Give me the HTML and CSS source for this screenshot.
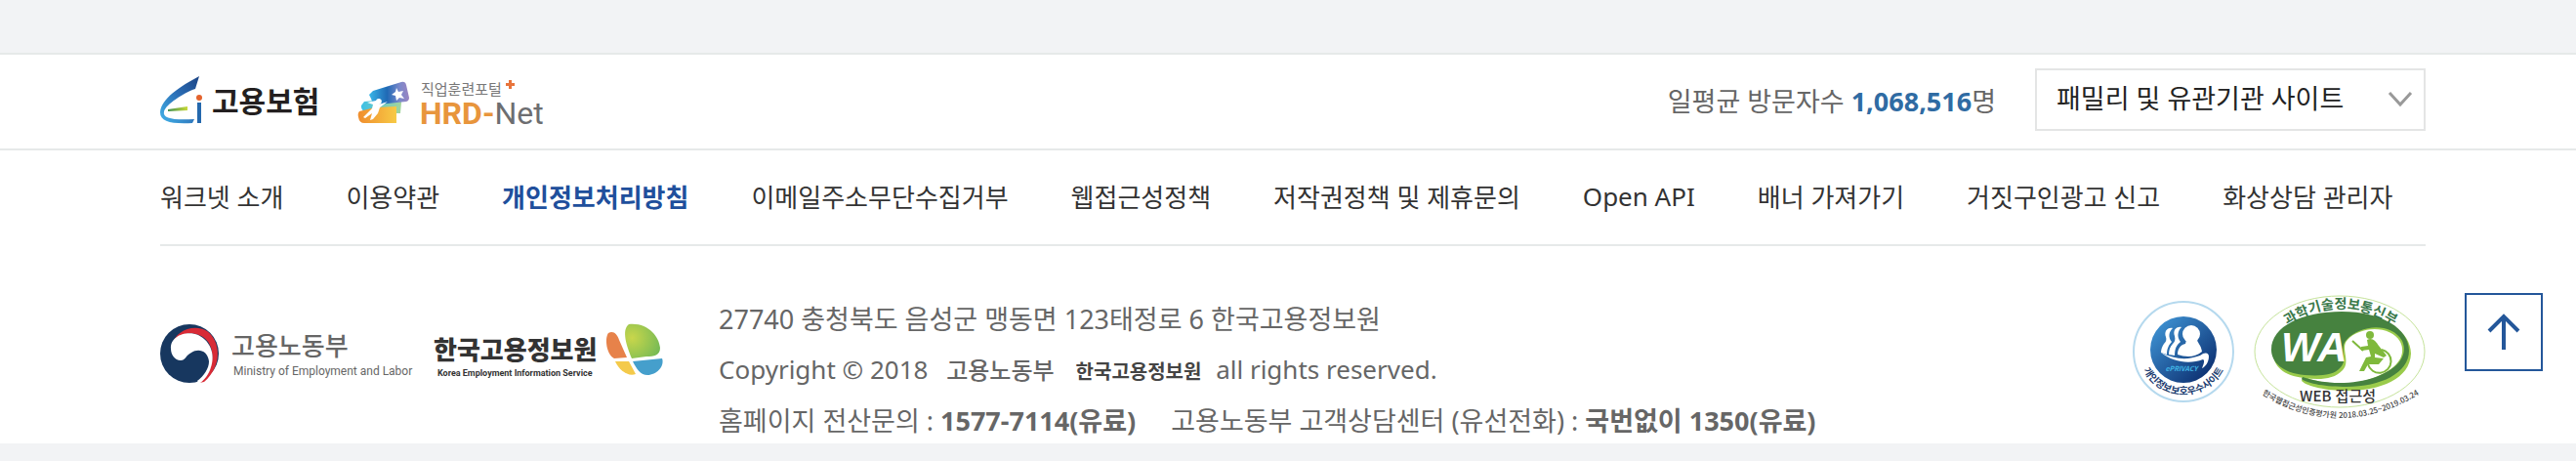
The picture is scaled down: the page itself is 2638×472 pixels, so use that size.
FILE: index.html
```html
<!DOCTYPE html>
<html lang="ko">
<head>
<meta charset="UTF-8" />
<meta name="viewport" content="width=device-width, initial-scale=1" />
<title>워크넷</title>
<link rel="stylesheet" href="styles.css">
</head>
<body>
<footer class="footer">
  <div class="footer-top">
    <div class="partners">
      <a href="#" aria-label="고용보험">
        <svg width="162" height="52" viewBox="0 0 162 52">
          <defs>
            <linearGradient id="eiBlue" x1="0" y1="1" x2="1" y2="0">
              <stop offset="0" stop-color="#43b4ea" />
              <stop offset="0.55" stop-color="#2a6cb4" />
              <stop offset="1" stop-color="#1c4485" />
            </linearGradient>
            <linearGradient id="eiBar">
              <stop offset="0" stop-color="#3f8f50" />
              <stop offset="1" stop-color="#c9d938" />
            </linearGradient>
          </defs>
          <path fill="url(#eiBlue)" d="M40 2L36 15C24 19 6 31 4 38C2 46 15 47 35 46L33 50C12 51 0 49 0 39C1 25 21 12 40 2Z" />
          <path fill="url(#eiBar)" d="M8 36L28 33V37L8 38Z" />
          <circle cx="40" cy="24" r="3" fill="#e4632d" />
          <path fill="#2468ad" d="M38 29h4v21h-4z" />
          <text class="logo-ei" x="53" y="39">고용보험</text>
        </svg>
      </a>
      <a href="#" aria-label="직업훈련포털 HRD-Net">
        <svg width="194" height="52" viewBox="0 0 194 52">
          <defs>
            <linearGradient id="hrdBlue">
              <stop offset="0" stop-color="#38b6e8" />
              <stop offset="0.45" stop-color="#2069b5" />
              <stop offset="0.75" stop-color="#7888cb" />
              <stop offset="1" stop-color="#9b85c2" />
            </linearGradient>
            <linearGradient id="hrdOrange">
              <stop offset="0" stop-color="#f08d2d" />
              <stop offset="1" stop-color="#f7ca46" />
            </linearGradient>
            <linearGradient id="hrdTeal">
              <stop offset="0" stop-color="#3dc0e6" />
              <stop offset="1" stop-color="#a4d59b" />
            </linearGradient>
          </defs>
          <path fill="url(#hrdTeal)" d="M7 28L42 25Q45 26 45 29L44 40H9Q3 36 4 32Z" />
          <path fill="url(#hrdOrange)" d="M2 38Q0 40 1 44Q2 50 7 50H40V33L18 34Z" />
          <path fill="url(#hrdBlue)" d="M16 17L45 8Q49 7 50 11L53 24Q53 27 50 28L21 31Q15 30 14 25L12 21Z" />
          <path fill="#fff" d="M40 14l2 4 5-1-2 4 3 4-5-1-3 3-1-5-4-1 4-3z" />
          <path fill="#fff" d="M19 27a3 3 0 1 1 3 4l9-3-8 6-2 6-5 6-3 1 2-7-7 5-2-1 9-9 1-4-6-2z" />
          <text class="logo-hrd-small" x="65" y="21">직업훈련포털</text>
          <path fill="#e8743b" d="M155 6h3v3h3v3h-3v3h-3v-3h-3v-3h3z" />
          <text class="logo-hrd" x="64" y="51">HRD-<tspan class="logo-net">Net</tspan></text>
        </svg>
      </a>
    </div>
    <div class="top-right">
      <p class="visitors">일평균 방문자수 <strong>1,068,516</strong>명</p>
      <div class="family">
        <select aria-label="패밀리 및 유관기관 사이트">
          <option>패밀리 및 유관기관 사이트</option>
        </select>
        <svg class="chevron" width="26" height="16" viewBox="0 0 26 16"><path d="M2 1l11 12L24 1" fill="none" stroke="#999" stroke-width="3" /></svg>
      </div>
    </div>
  </div>

  <div class="footer-body">
    <nav class="menu">
      <a href="#">워크넷 소개</a>
      <a href="#">이용약관</a>
      <a href="#" class="privacy">개인정보처리방침</a>
      <a href="#">이메일주소무단수집거부</a>
      <a href="#">웹접근성정책</a>
      <a href="#">저작권정책 및 제휴문의</a>
      <a href="#">Open API</a>
      <a href="#">배너 가져가기</a>
      <a href="#">거짓구인광고 신고</a>
      <a href="#">화상상담 관리자</a>
    </nav>

    <div class="info">
      <div class="agencies">
        <a href="#" aria-label="고용노동부">
          <svg width="264" height="60" viewBox="0 0 264 60">
            <circle cx="30" cy="30" r="30" fill="#17375f" />
            <path fill="#d82b36" d="M12 22C15 7 34 -1 48 7C62 17 64 43 45 59L40 60L49 50C57 35 54 18 42 12C29 5 17 12 12 22Z" />
            <path fill="#fff" d="M11 25C10 12 27 6 39 11C53 18 57 33 51 47C48 54 44 58 40 61L38 58C45 53 50 45 50 38C49 27 39 24 32 29C26 32 26 37 21 37C15 37 11 31 11 25Z" />
            <text class="logo-moel" x="73" y="32">고용노동부</text>
            <text class="logo-moel-en" x="75" y="52">Ministry of Employment and Labor</text>
          </svg>
        </a>
        <a href="#" aria-label="한국고용정보원">
          <svg width="236" height="60" viewBox="0 0 236 60">
            <defs>
              <radialGradient id="leafGreen" cx="0.2" cy="0.4" r="0.9">
                <stop offset="0" stop-color="#c9d64b" />
                <stop offset="1" stop-color="#72b955" />
              </radialGradient>
            </defs>
            <text class="logo-keis" x="0" y="36">한국고용정보원</text>
            <text class="logo-keis-en" x="4" y="53">Korea Employment Information Service</text>
            <path fill="#e7824a" d="M179 9C184 6 188 10 190 16L198 34L185 35C177 31 175 14 179 9Z" />
            <path fill="url(#leafGreen)" d="M200 0C220 -2 231 13 232 24C232 32 226 33 218 33L203 35C198 23 192 6 200 0Z" />
            <path fill="#f4ca4b" d="M186 38H200L207 51C199 54 190 47 186 38Z" />
            <path fill="#459fcc" d="M204 38L234 35C237 43 228 52 219 52C212 52 208 46 204 38Z" />
          </svg>
        </a>
      </div>

      <address class="address">
        <p>27740 충청북도 음성군 맹동면 123태정로 6 한국고용정보원</p>
        <p class="copyright">Copyright © 2018 <span class="mark-moel">고용노동부</span><span class="mark-keis">한국고용정보원</span> all rights reserved.</p>
        <p><span class="phone">홈페이지 전산문의 : <strong>1577-7114(유료)</strong></span>고용노동부 고객상담센터 (유선전화) : <strong>국번없이 1350(유료)</strong></p>
      </address>

      <div class="badges">
        <a href="#" aria-label="개인정보보호우수사이트">
          <svg width="104" height="104" viewBox="0 0 104 104">
            <defs>
              <linearGradient id="privacyBlue" x1="0" y1="0" x2="1" y2="1">
                <stop offset="0.1" stop-color="#3d91d2" />
                <stop offset="0.9" stop-color="#0c2f70" />
              </linearGradient>
              <path id="privacyArc" d="M10 69A46 46 0 0 0 94 69" />
            </defs>
            <circle cx="52" cy="52" r="51" fill="#fff" stroke="#b5d9ee" stroke-width="2" />
            <circle cx="52" cy="50" r="34" fill="url(#privacyBlue)" />
            <g fill="#fff">
              <path d="M41 28c-6-1-9 4-7 9 1 3 0 5-2 7-2 3-3 6-3 9l6 2c0-6 2-10 5-13-4-5-3-10 1-14z" />
              <path d="M50 27c-6-1-9 4-7 9 1 4 0 6-2 8-3 3-4 7-4 11l6 1c0-7 2-11 6-14-4-5-3-11 1-15z" />
              <circle cx="60" cy="34" r="9" />
              <path d="M55 40h11c1 4 4 5 5 12-7 6-16 6-25 3 0-6 3-10 8-11z" />
              <path d="M29 53c14 7 27 8 40 3 5-4 9-3 9 1 0 6-4 11-7 12 2-5 3-8 1-9-14 5-30 3-43-7z" />
            </g>
            <text class="privacy-en" x="50" y="72" text-anchor="middle">ePRIVACY</text>
            <text class="privacy-ko" text-anchor="middle"><textPath href="#privacyArc" startOffset="50%">개인정보보호우수사이트</textPath></text>
          </svg>
        </a>
        <a href="#" aria-label="WEB 접근성 인증">
          <svg width="176" height="126" viewBox="0 0 176 126">
            <defs>
              <path id="waTop" d="M24 38Q88 -10 154 38" />
              <path id="waBottom" d="M4 99Q88 153 174 99" />
            </defs>
            <ellipse cx="88" cy="58" rx="87" ry="57" fill="#fff" stroke="#c5e39a" stroke-width="1" />
            <path fill="#9acb4b" d="M20 60C20 34 52 19 92 20C134 20 161 37 161 60C160 86 130 98 95 98C75 98 55 94 49 88L50 84C75 92 100 94 125 84C150 74 156 60 150 48C140 30 108 32 96 46C88 54 100 68 91 77C82 87 66 87 52 85C30 83 20 72 20 60Z" />
            <path fill="#46823f" d="M18 56C18 32 50 17 90 17C132 17 159 35 159 57C159 80 130 94 95 94C75 94 55 91 49 86L50 84C70 91 100 93 125 84C150 75 158 60 152 47C140 27 108 31 95 46C87 54 97 66 89 74C82 83 66 83 52 82C30 80 18 69 18 56Z" />
            <text class="wa-top" text-anchor="middle"><textPath href="#waTop" startOffset="50%">과학기술정보통신부</textPath></text>
            <text class="wa-letters" x="28" y="68">WA</text>
            <circle cx="119" cy="41" r="4" fill="#7fb93c" />
            <path fill="#7fb93c" d="M116 46c5-3 9 1 12 6l8 10-3 2-9-4v4l9 1-5 6H117l-4 7h-5l7-14 5-1-2-7-8 1v-4l7-1z" />
            <path fill="none" stroke="#7fb93c" stroke-width="2" d="M101 47l11 10m19-1a12 12 0 1 1-14 15" />
            <text class="wa-web" x="86" y="109" text-anchor="middle">WEB 접근성</text>
            <text class="wa-bottom" text-anchor="middle"><textPath href="#waBottom" startOffset="50%">한국웹접근성인증평가원 2018.03.25~2019.03.24</textPath></text>
          </svg>
        </a>
      </div>
    </div>
  </div>

  <button class="to-top" type="button" aria-label="맨 위로">
    <svg width="32" height="36" viewBox="0 0 32 36"><path d="M16 36V2M1 17L16 2l15 15" fill="none" stroke="#24579a" stroke-width="4" /></svg>
  </button>
</footer>
</body>
</html>
```
FILE: styles.css
```css
* {
  box-sizing: border-box;
}
body {
  margin: 0;
  padding: 54px 0 20px;
  background: #f2f3f5;
  color: #666;
  font-family: "Noto Sans", "Noto Sans CJK KR", sans-serif;
  font-size: 27px;
  white-space: nowrap;
}
p {
  margin: 0;
}
a {
  color: inherit;
  text-decoration: none;
}
svg {
  display: block;
  overflow: visible;
}
text,
.mark-moel,
.mark-keis {
  font-family: "Noto Sans CJK KR", sans-serif;
}

.footer {
  position: relative;
  background: #fff;
  border-top: 2px solid #e6e9e9;
}

/* top row: partner logos, visitors, family sites */
.footer-top {
  display: flex;
  align-items: center;
  justify-content: space-between;
  height: 98px;
  padding: 0 154px 4px 164px;
  border-bottom: 2px solid #e6e9e9;
}
.partners,
.top-right,
.agencies {
  display: flex;
  align-items: center;
}
.partners {
  gap: 40px;
}
.top-right {
  gap: 40px;
}
.visitors strong {
  color: #2f6ba3;
}
.family {
  position: relative;
  width: 400px;
}
.family select {
  appearance: none;
  display: block;
  width: 100%;
  height: 64px;
  padding: 0 60px 4px 20px;
  border: 2px solid #e4e5e5;
  border-radius: 0;
  background: #fff;
  color: #222;
  font: inherit;
}
.chevron {
  position: absolute;
  top: 24px;
  right: 13px;
  pointer-events: none;
}

.footer-body {
  padding: 0 154px 0 164px;
}
.menu {
  display: flex;
  align-items: center;
  gap: 64px;
  height: 98px;
  padding-bottom: 2px;
  border-bottom: 2px solid #e6e9e9;
  color: #333;
  font-size: 26px;
}
.menu .privacy {
  color: #204f9c;
  font-weight: 700;
}

.info {
  display: flex;
  align-items: flex-start;
  padding-top: 50px;
}
.agencies {
  gap: 16px;
  padding-top: 30px;
}
.address {
  display: flex;
  flex-direction: column;
  gap: 5px;
  margin-left: 56px;
  padding-top: 2px;
  font-style: normal;
  line-height: 46px;
}
.copyright {
  font-size: 26px;
}
.phone {
  margin-right: 36px;
}
.mark-moel {
  margin: 0 22px 0 12px;
  font-size: 24px;
  font-weight: 500;
}
.mark-keis {
  margin-right: 8px;
  color: #444;
  font-size: 20px;
  font-weight: 700;
}
.badges {
  display: flex;
  align-items: flex-start;
  gap: 20px;
  margin-left: auto;
}
.badges a:first-child {
  padding-top: 6px;
}

.to-top {
  position: absolute;
  top: 244px;
  right: 34px;
  display: flex;
  align-items: center;
  justify-content: center;
  width: 80px;
  height: 80px;
  padding: 0;
  border: 2px solid #24579a;
  background: #fff;
  cursor: pointer;
}

/* logo lettering */
.logo-ei {
  font-size: 30px;
  font-weight: 700;
  fill: #231f20;
}
.logo-hrd-small {
  font-size: 15px;
  fill: #777;
}
text.logo-hrd {
  font-family: Roboto, sans-serif;
  font-size: 32px;
  font-weight: 700;
  fill: #e8953c;
}
.logo-net {
  font-weight: 400;
  fill: #6d6e71;
}
.logo-moel {
  font-size: 26px;
  font-weight: 500;
  fill: #666;
}
text.logo-moel-en {
  font-family: Roboto, sans-serif;
  font-size: 12px;
  fill: #666;
}
.logo-keis {
  font-size: 26px;
  font-weight: 900;
  fill: #333;
}
text.logo-keis-en {
  font-family: Roboto, sans-serif;
  font-size: 9px;
  font-weight: 700;
  fill: #333;
}
.privacy-en {
  font-size: 7px;
  font-style: italic;
  font-weight: 700;
  fill: #40b4e5;
}
.privacy-ko {
  font-size: 10px;
  font-weight: 700;
  fill: #1b3c70;
}
.wa-top {
  font-size: 14px;
  font-weight: 700;
  fill: #39794a;
}
text.wa-letters {
  font-family: "Liberation Sans", sans-serif;
  font-size: 42px;
  font-style: italic;
  font-weight: 700;
  fill: #fff;
}
.wa-web {
  font-size: 15px;
  font-weight: 500;
  fill: #333;
}
.wa-bottom {
  font-size: 8px;
  font-weight: 500;
  fill: #444;
}
```
